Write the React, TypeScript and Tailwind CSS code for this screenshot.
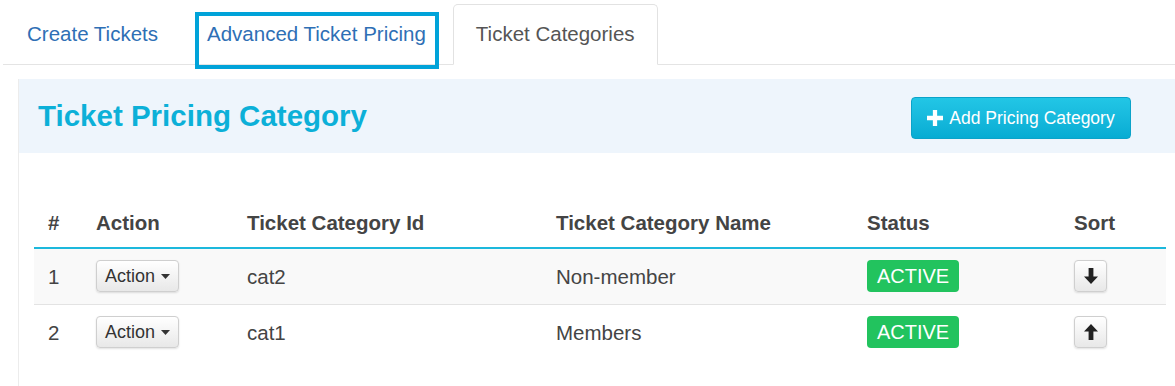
import React from "react";

const ArrowIcon: React.FC<{ up?: boolean }> = ({ up }) => (
  <svg width="14" height="16" viewBox="0 0 14 16" className={up ? "rotate-180" : ""}>
    <path d="M4.6 0h4.8v8.5H14l-7 7.5-7-7.5h4.6z" fill="#222" />
  </svg>
);

const rows = [
  { n: 1, id: "cat2", name: "Non-member", up: false },
  { n: 2, id: "cat1", name: "Members", up: true },
];

const App: React.FC = () => {
  return (
    <div
      className="w-[1175px] h-[386px] overflow-hidden bg-white text-[#444]"
      style={{ fontFamily: '"Liberation Sans", Arial, sans-serif' }}
    >
      {/* Tabs */}
      <div className="ml-[3px] pt-[4px] flex items-end border-b border-[#e4e4e4] h-[65px] whitespace-nowrap">
        <div className="h-[60px] px-6 flex items-center text-[20.5px] text-[#2e6fb5]">Create Tickets</div>
        <div className="relative h-[60px] px-[25px] flex items-center text-[20.5px] text-[#2e6fb5]">
          Advanced Ticket Pricing
          <span className="absolute left-[13px] right-[12px] top-[8px] h-[57px] border-[4px] border-[#00a3d9]" />
        </div>
        <div className="h-[61px] ml-[2px] mb-[-1px] px-[22px] flex items-center text-[20.5px] text-[#555] bg-white border border-[#e2e2e2] border-b-white rounded-t-[5px]">
          Ticket Categories
        </div>
      </div>

      {/* Panel */}
      <div className="ml-[18px] mt-[14px] w-[1162px] border-l border-[#ececec]">
        <div className="h-[74px] bg-[#eef5fc] flex items-start justify-between pl-[19px] pr-[49px]">
          <h2 className="mt-[18px] text-[29.5px] leading-[38px] font-bold text-[#0cb0d8]">Ticket Pricing Category</h2>
          <button className="mt-[18px] h-[42px] w-[220px] flex items-center justify-center gap-[6px] rounded-[4px] border border-[#0ba3c9] bg-gradient-to-b from-[#22c6e6] to-[#06acd3] text-white text-[17.5px]">
            <svg width="16" height="16" viewBox="0 0 15 15">
              <path d="M5.5 0h4v5.5H15v4H9.5V15h-4V9.5H0v-4h5.5z" fill="#fff" />
            </svg>
            Add Pricing Category
          </button>
        </div>

        <div className="px-[15px] pt-[47px] pb-[40px]">
          <table className="w-[1132px] table-fixed border-collapse text-[20.5px]">
            <colgroup>
              <col className="w-[48px]" />
              <col className="w-[151px]" />
              <col className="w-[309px]" />
              <col className="w-[311px]" />
              <col className="w-[207px]" />
              <col className="w-[106px]" />
            </colgroup>
            <thead>
              <tr className="h-[48px] border-b-2 border-[#1cb8dc] text-left text-[#444]">
                <th className="px-[14px] font-bold">#</th>
                <th className="px-[14px] font-bold">Action</th>
                <th className="px-[14px] font-bold">Ticket Category Id</th>
                <th className="px-[14px] font-bold">Ticket Category Name</th>
                <th className="px-[14px] font-bold">Status</th>
                <th className="px-[14px] font-bold">Sort</th>
              </tr>
            </thead>
            <tbody>
              {rows.map((r, i) => (
                <tr key={r.n} className={`h-[56px] ${i === 0 ? "bg-[#f9f9f9] border-b border-[#e3e3e3]" : "bg-white"}`}>
                  <td className="px-[14px] pt-[2px]">{r.n}</td>
                  <td className="px-[14px]">
                    <button className="h-[32px] w-[83px] flex items-center justify-center gap-[6px] rounded-[4px] border border-[#cfcfcf] bg-gradient-to-b from-white to-[#e8e8e8] shadow-[0_1px_2px_rgba(0,0,0,0.12)] text-[18px] text-[#333]">
                      Action
                      <svg width="9" height="5" viewBox="0 0 9 5">
                        <path d="M0 0h9L4.5 5z" fill="#333" />
                      </svg>
                    </button>
                  </td>
                  <td className="px-[14px] pt-[2px]">{r.id}</td>
                  <td className="px-[14px] pt-[2px]">{r.name}</td>
                  <td className="px-[14px]">
                    <span className="inline-flex items-center justify-center h-[32px] w-[92px] rounded-[4px] bg-[#22c35e] text-white text-[20px]">
                      ACTIVE
                    </span>
                  </td>
                  <td className="px-[14px]">
                    <button className="h-[32px] w-[33px] flex items-center justify-center rounded-[4px] border border-[#cfcfcf] bg-gradient-to-b from-white to-[#e8e8e8] shadow-[0_1px_2px_rgba(0,0,0,0.12)]">
                      <ArrowIcon up={r.up} />
                    </button>
                  </td>
                </tr>
              ))}
            </tbody>
          </table>
        </div>
      </div>
    </div>
  );
};

export default App;
